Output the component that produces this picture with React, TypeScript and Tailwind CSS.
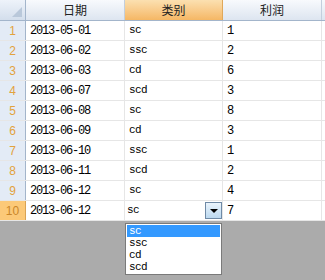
import React from "react";

const rows: [string, string, string][] = [
  ["2013-05-01", "sc", "1"],
  ["2013-06-02", "ssc", "2"],
  ["2013-06-03", "cd", "6"],
  ["2013-06-07", "scd", "3"],
  ["2013-06-08", "sc", "8"],
  ["2013-06-09", "cd", "3"],
  ["2013-06-10", "ssc", "1"],
  ["2013-06-11", "scd", "2"],
  ["2013-06-12", "sc", "4"],
  ["2013-06-12", "sc", "7"],
];

const mono = { fontFamily: '"Liberation Mono", "DejaVu Sans Mono", monospace' };
const cjk = { fontFamily: '"Noto Sans CJK SC", "Noto Sans", sans-serif' };

export default function App() {
  return (
    <div className="relative w-[325px] h-[280px] bg-[#ababab] overflow-hidden">
      {/* header */}
      <div className="flex h-[21px] border-b border-[#a3b5cb] bg-gradient-to-b from-[#f8fafd] to-[#dde5f0]">
        <div className="relative w-[26px] h-full border-r border-[#a3b5cb] bg-gradient-to-b from-[#eef3fa] to-[#d3deec]">
          <div className="absolute right-[3px] bottom-[3px] w-0 h-0 border-l-[10px] border-l-transparent border-b-[10px] border-b-[#b9c8da]" />
        </div>
        <div className="w-[99px] h-full border-r border-[#c3cfdd] flex items-center justify-center text-[12px] text-[#222]" style={cjk}>日期</div>
        <div className="w-[98px] h-full border-r border-[#e0a85a] bg-gradient-to-b from-[#fbe0b0] to-[#f5b764] flex items-center justify-center text-[12px] text-[#222]" style={cjk}>类别</div>
        <div className="w-[99px] h-full border-r border-[#c3cfdd] flex items-center justify-center text-[12px] text-[#222]" style={cjk}>利润</div>
        <div className="flex-1 h-full" />
      </div>
      {/* rows */}
      {rows.map((r, i) => {
        const last = i === rows.length - 1;
        return (
          <div key={i} className="flex h-[20px] bg-white border-b border-[#e6e6e6]">
            <div
              className={
                last
                  ? "w-[26px] h-full border-r border-[#d9a354] bg-[#fcc978] flex items-center justify-center text-[12px] text-[#c9862a]"
                  : "w-[26px] h-full border-r border-[#a3b5cb] bg-[#e3ebf6] flex items-center justify-center text-[12px] text-[#e2a23d]"
              }
              style={{ fontFamily: '"Liberation Sans", sans-serif' }}
            >
              {i + 1}
            </div>
            <div className="w-[99px] h-full border-r border-[#e6e6e6] flex items-center pl-[4px] text-[12px] tracking-[-1.2px] text-black" style={mono}>
              {r[0]}
            </div>
            <div className="relative w-[98px] h-full border-r border-[#e6e6e6] flex items-center pl-[4px] text-[11px] tracking-[-0.6px] text-black" style={mono}>
              <span className={last ? "-ml-[2px]" : ""}>{r[1]}</span>
              {last && (
                <div className="absolute right-[0px] top-[1px] w-[17px] h-[17px] border border-[#6f8aa6] bg-gradient-to-b from-[#eaf4fc] to-[#bcd9f0] flex items-center justify-center">
                  <div className="w-0 h-0 border-l-[4px] border-l-transparent border-r-[4px] border-r-transparent border-t-[4px] border-t-black" />
                </div>
              )}
            </div>
            <div className="w-[99px] h-full border-r border-[#e6e6e6] flex items-center pl-[4px] text-[12px] tracking-[-1.2px] text-black" style={mono}>
              {r[2]}
            </div>
            <div className="flex-1 h-full" />
          </div>
        );
      })}
      {/* dropdown list */}
      <div className="absolute left-[125px] top-[223px] w-[97px] h-[52px] bg-white border border-[#7a7a7a] py-[1px] px-[1px] text-[11px] tracking-[-0.6px]" style={mono}>
        <div className="h-[12px] leading-[12px] bg-[#3399ff] text-white pl-[2px]">sc</div>
        <div className="h-[12px] leading-[12px] text-black pl-[2px]">ssc</div>
        <div className="h-[12px] leading-[12px] text-black pl-[2px]">cd</div>
        <div className="h-[12px] leading-[12px] text-black pl-[2px]">scd</div>
      </div>
    </div>
  );
}
